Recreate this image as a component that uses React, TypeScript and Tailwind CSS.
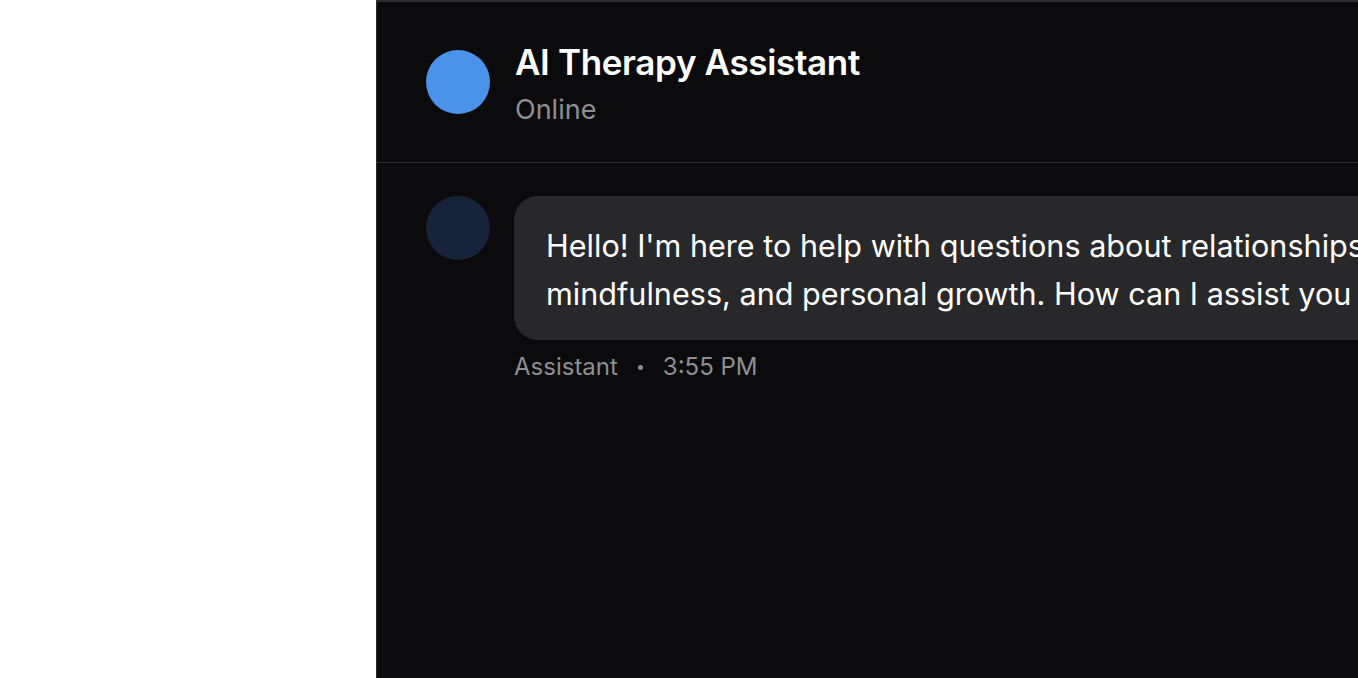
import React from 'react'

const font = { fontFamily: 'Inter, "Noto Sans", sans-serif' }

export default function App() {
  return (
    <div className="flex h-[678px] w-[1358px] overflow-hidden bg-white" style={font}>
      {/* blank left pane */}
      <div className="w-[376px] shrink-0 bg-white" />

      {/* chat panel */}
      <div className="flex w-[1400px] shrink-0 flex-col border-l border-t-2 border-[#2c2c2e] bg-[#0b0b0d]">
        <header className="flex h-[161px] items-center gap-[25px] border-b border-[#2c2c2e] px-[49px]">
          <div className="h-16 w-16 shrink-0 rounded-full bg-[#4a92ea]" />
          <div className="mt-[3px] flex flex-col gap-2">
            <h1 className="text-[35px] font-semibold leading-[44px] tracking-[-0.01em] text-white">
              AI Therapy Assistant
            </h1>
            <span className="text-[27px] leading-[36px] text-[#8e8e93]">Online</span>
          </div>
        </header>

        <div className="flex flex-col px-[49px] pt-8">
          <div className="flex gap-6">
            <div className="mt-px h-16 w-16 shrink-0 rounded-full bg-[#16233a]" />
            <div className="flex flex-col">
              <div className="mt-px w-[1300px] whitespace-nowrap rounded-3xl bg-[#28282a] px-8 pb-[22px] pt-[26px] text-[30.6px] leading-[48px] text-white">
                <p>Hello! I'm here to help with questions about relationships, emotional wellbeing,</p>
                <p>mindfulness, and personal growth. How can I assist you today?</p>
              </div>
              <div className="mt-3 flex items-center gap-5 text-[24px] leading-[30px] text-[#8e8e93]">
                <span>Assistant</span>
                <span className="h-[5px] w-[5px] rounded-full bg-[#8e8e93]" />
                <span>3:55 PM</span>
              </div>
            </div>
          </div>
        </div>
      </div>
    </div>
  )
}
